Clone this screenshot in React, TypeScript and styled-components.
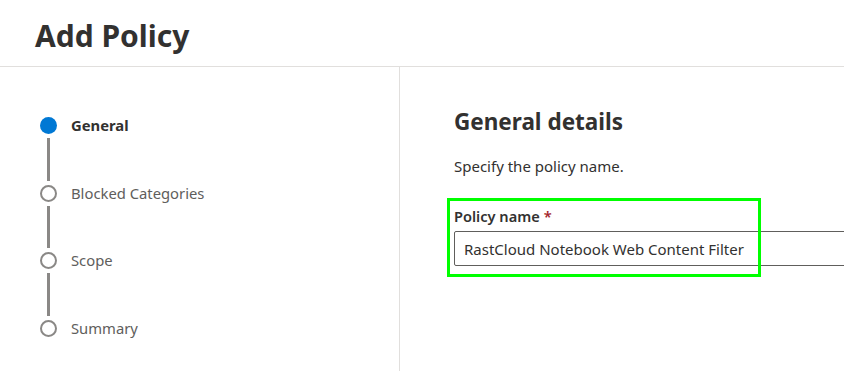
import React from "react";
import styled, { createGlobalStyle } from "styled-components";

const GlobalStyle = createGlobalStyle`
  html, body {
    margin: 0;
    padding: 0;
    background: #ffffff;
    overflow: hidden;
  }
  body {
    font-family: "Noto Sans", "Open Sans", sans-serif;
    color: #323130;
  }
`;

const Page = styled.div`
  width: 844px;
  height: 371px;
  display: flex;
  flex-direction: column;
  overflow: hidden;
`;

const Header = styled.header`
  height: 66px;
  flex: none;
  display: flex;
  align-items: center;
  padding-left: 35px;
  border-bottom: 1px solid #e1dfdd;
`;

const Title = styled.h1`
  margin: 0;
  font-size: 30px;
  font-weight: 700;
  line-height: 36px;
  color: #323130;
  padding-top: 5px;
`;

const Body = styled.div`
  flex: 1;
  display: flex;
  min-height: 0;
`;

const Sidebar = styled.nav`
  width: 400px;
  flex: none;
  border-right: 1px solid #e1dfdd;
  padding: 50px 0 0 40px;
  box-sizing: border-box;
`;

const StepList = styled.ol`
  list-style: none;
  margin: 0;
  padding: 0;
`;

const StepItem = styled.li`
  display: flex;
  gap: 14px;
`;

const Marker = styled.div`
  width: 17px;
  display: flex;
  flex-direction: column;
  align-items: center;
`;

const Dot = styled.span<{ $active?: boolean }>`
  width: 17px;
  height: 17px;
  flex: none;
  box-sizing: border-box;
  border-radius: 50%;
  background: ${(p) => (p.$active ? "#0078d4" : "#ffffff")};
  border: ${(p) => (p.$active ? "none" : "2px solid #8a8886")};
`;

const Connector = styled.span`
  width: 3px;
  height: 42.5px;
  flex: none;
  margin: 4px 0 4px;
  background: #8a8886;
`;

const StepLabel = styled.span<{ $active?: boolean }>`
  font-size: 14.8px;
  line-height: 16px;
  font-weight: ${(p) => (p.$active ? 700 : 400)};
  color: ${(p) => (p.$active ? "#323130" : "#605e5c")};
`;

const Main = styled.main`
  flex: 1;
  padding: 39px 0 0 54px;
  min-width: 0;
`;

const SectionTitle = styled.h2`
  margin: 0;
  font-size: 22.5px;
  line-height: 32px;
  font-weight: 700;
  color: #323130;
`;

const Description = styled.p`
  margin: 18px 0 0;
  font-size: 15px;
  line-height: 20px;
  color: #323130;
`;

const FieldGroup = styled.div`
  position: relative;
  margin-top: 30px;
`;

const FieldLabel = styled.label`
  display: block;
  font-size: 14.6px;
  line-height: 20px;
  font-weight: 600;
  color: #323130;
`;

const Required = styled.span`
  color: #a4262c;
  margin-left: 4px;
`;

const TextInput = styled.input`
  display: block;
  margin-top: 5px;
  width: 440px;
  height: 35px;
  box-sizing: border-box;
  border: 1px solid #605e5c;
  border-radius: 2px;
  padding: 0 9px;
  font-family: "Noto Sans", "Open Sans", sans-serif;
  font-size: 15px;
  color: #323130;
  background: #ffffff;
  outline: none;
`;

const Highlight = styled.div`
  position: absolute;
  left: -7px;
  top: -8px;
  width: 314px;
  height: 79px;
  box-sizing: border-box;
  border: 3px solid #00ff00;
  pointer-events: none;
`;

const steps = ["General", "Blocked Categories", "Scope", "Summary"];

export default function App() {
  return (
    <>
      <GlobalStyle />
      <Page>
        <Header>
          <Title>Add Policy</Title>
        </Header>
        <Body>
          <Sidebar>
            <StepList>
              {steps.map((s, i) => (
                <StepItem key={s}>
                  <Marker>
                    <Dot $active={i === 0} />
                    {i < steps.length - 1 && <Connector />}
                  </Marker>
                  <StepLabel $active={i === 0}>{s}</StepLabel>
                </StepItem>
              ))}
            </StepList>
          </Sidebar>
          <Main>
            <SectionTitle>General details</SectionTitle>
            <Description>Specify the policy name.</Description>
            <FieldGroup>
              <FieldLabel htmlFor="policy-name">
                Policy name<Required>*</Required>
              </FieldLabel>
              <TextInput
                id="policy-name"
                defaultValue="RastCloud Notebook Web Content Filter"
              />
              <Highlight />
            </FieldGroup>
          </Main>
        </Body>
      </Page>
    </>
  );
}
